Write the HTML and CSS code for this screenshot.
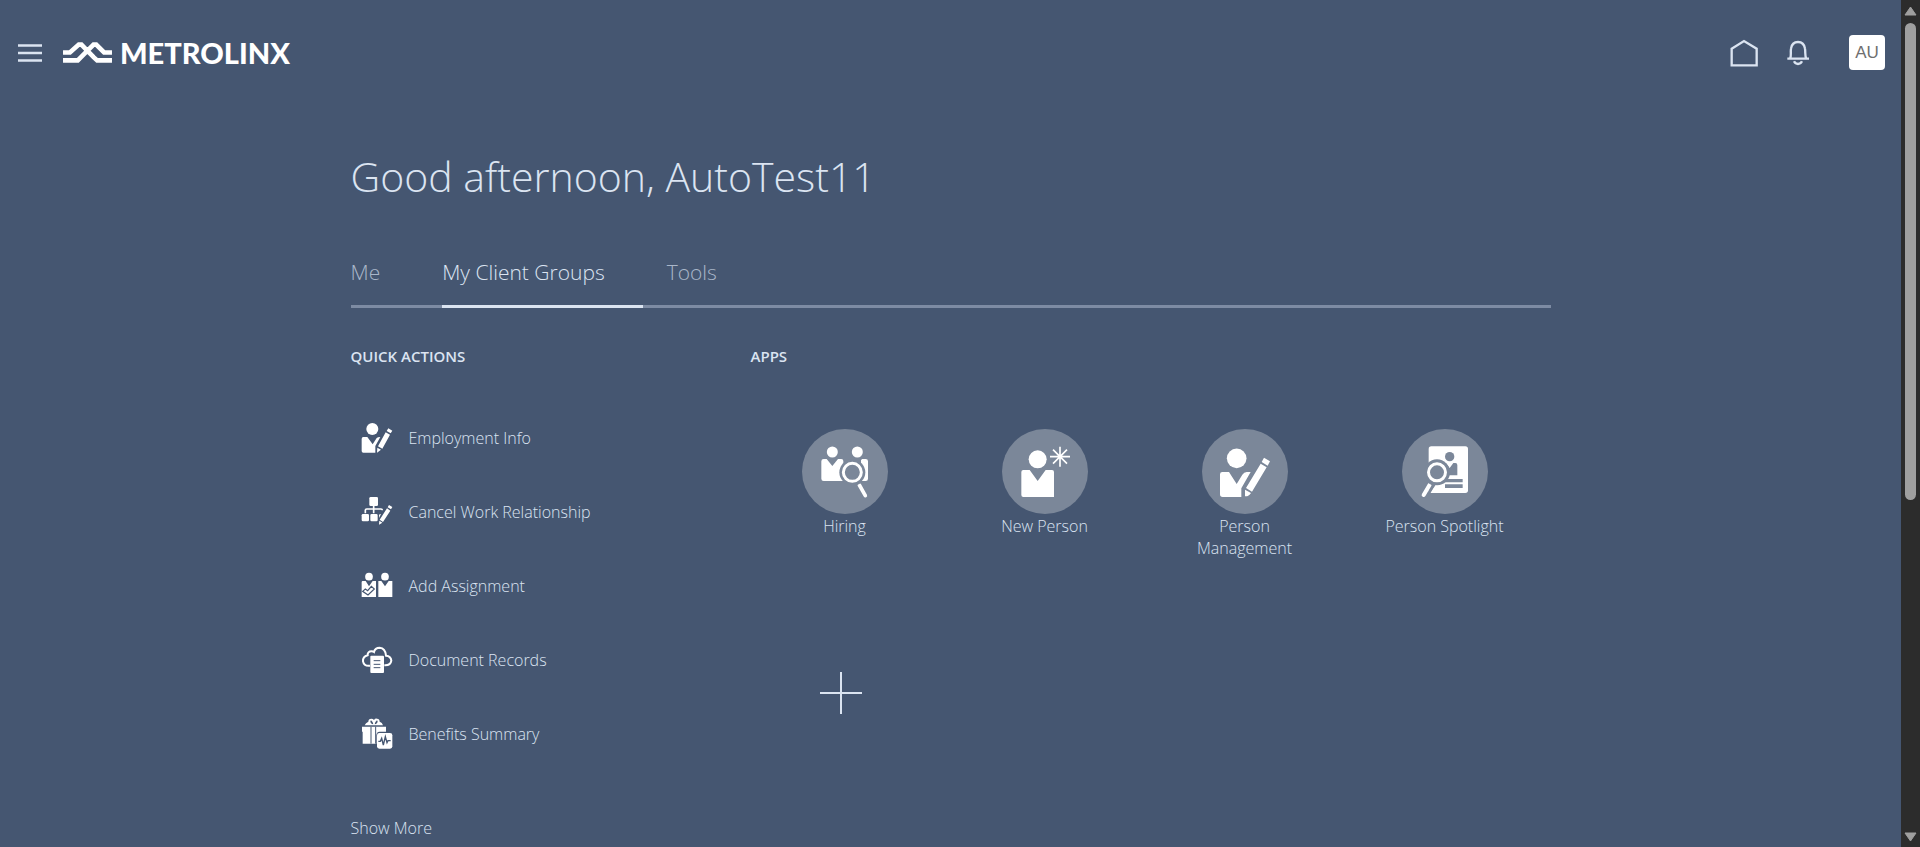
FILE: index.html
```html
<!DOCTYPE html>
<html lang="en">
<head>
<meta charset="utf-8">
<title>Metrolinx</title>
<link rel="stylesheet" href="styles.css">
</head>
<body>
<div class="page">
  <header class="topbar">
    <button class="icon-button" type="button" aria-label="Navigator">
      <svg class="icon-menu" viewBox="0 0 24 18"><path d="M0 1.5h24M0 9h24M0 16.5h24"/></svg>
    </button>
    <a class="brand" href="#" aria-label="Metrolinx home">
      <svg class="brand-mark" viewBox="187 62 153 70">
        <path d="M189 97H210L237 73H245L282 111L293 121H338M189 121H234L246 109L282 73H290L314 97H338" fill="none" stroke="#fff" stroke-width="14"/>
      </svg>
      <span class="brand-name">METROLINX</span>
    </a>
    <nav class="tools" aria-label="Global">
      <a class="tool" href="#" aria-label="Home">
        <svg class="icon-tool" viewBox="90 117 84 84"><path d="M95 146L132 123L170 146V196H95Z"/></svg>
      </a>
      <button class="icon-button" type="button" aria-label="Notifications">
        <svg class="icon-tool" viewBox="252 117 84 84"><path d="M262 176H327M270 176C275 169 271 158 273 146C275 132 283 126 294 126S313 132 315 146C317 158 314 169 319 176"/><path d="M282 184Q286 192 294 192T306 184"/></svg>
      </button>
      <button class="avatar" type="button">AU</button>
    </nav>
  </header>

  <main class="content">
    <h1 class="greeting">Good afternoon, AutoTest11</h1>
    <nav class="tabs" aria-label="Springboard">
      <a class="tab" href="#">Me</a>
      <a class="tab tab-active" href="#" aria-current="page">My Client Groups</a>
      <a class="tab" href="#">Tools</a>
    </nav>

    <div class="columns">
      <section class="quick">
        <h2 class="section-title">QUICK ACTIONS</h2>
        <ul class="actions">
          <li><a class="action" href="#">
            <svg class="action-icon" viewBox="62 67 96 96">
              <circle cx="96" cy="88" r="18"/>
              <path d="M69 112H81L97 134L109 115Q112 112 120 112L105 139V159H69Q64 159 64 154V118Q64 112 69 112Z"/>
              <path d="M144 86L156 93L151 101L139 94ZM136 98L149 105L126 147L113 140ZM111 144L122 150L110 159Z"/>
            </svg>Employment Info</a></li>
          <li><a class="action" href="#">
            <svg class="action-icon" viewBox="62 289 96 96">
              <rect x="87" y="292" width="26" height="27" rx="4"/>
              <path d="M75 341V332Q75 328 79 328H122Q126 328 126 332M100 318V341" fill="none" stroke="#fff" stroke-width="5"/>
              <rect x="64" y="343" width="22" height="22" rx="4"/>
              <path d="M94 343H108Q112 343 112 347V361Q112 365 108 365H94Q90 365 90 361V347Q90 343 94 343ZM116 345Q118 343 122 343L116 355Z"/>
              <path d="M146 316L156 322L152 329L142 323ZM140 326L150 333L128 367L118 360ZM117 363L126 369L116 375Z"/>
            </svg>Cancel Work Relationship</a></li>
          <li><a class="action" href="#">
            <svg class="action-icon" viewBox="62 510 96 96">
              <circle cx="86" cy="530" r="11.500"/><circle cx="134" cy="530" r="11.500"/>
              <path d="M66 543H76L86 559L97 543H107V591H64V545ZM114 543H123L134 559L145 543H156V591H114Z"/>
              <path d="M67 574L75 567L82 572L93 559L102 567L83 585Z" fill="#fff" stroke="#455671" stroke-width="3.500"/>
            </svg>Add Assignment</a></li>
          <li><a class="action" href="#">
            <svg class="action-icon" viewBox="62 69 96 96">
              <path d="M89 134Q71 136 68 121Q67 107 82 103Q81 91 94 91Q98 91 101 93Q104 80 118 80Q135 81 137 104Q152 105 153 119Q151 134 132 133" fill="none" stroke="#fff" stroke-width="6"/>
              <rect x="90" y="104" width="41" height="52" rx="3"/>
              <path d="M100 119H120M100 130H120M100 140H120" stroke="#455671" stroke-width="3"/>
            </svg>Document Records</a></li>
          <li><a class="action" href="#">
            <svg class="action-icon" viewBox="62 292 96 96">
              <path d="M73 314Q76 306 84 303Q84 294 93 294Q98 294 101 298Q104 293 110 294Q118 294 118 303Q126 305 128 314Z"/>
              <path d="M92 299Q87 304 95 310L99 311Q98 303 92 299ZM110 299Q115 304 107 310L103 311Q104 303 110 299Z" fill="#455671"/>
              <path d="M65 318H137V333H118Q108 334 108 344V369H67V333H65Z"/>
              <path d="M92 318V369M106 318V369" stroke="#455671" stroke-width="3"/>
              <rect x="110" y="337" width="46" height="47" rx="7"/>
              <path d="M114 362H120L124 353L129 373L135 348L140 366L143 360H151" fill="none" stroke="#455671" stroke-width="4"/>
            </svg>Benefits Summary</a></li>
        </ul>
        <a class="show-more" href="#">Show More</a>
      </section>

      <section class="apps">
        <h2 class="section-title">APPS</h2>
        <ul class="app-grid">
          <li><a class="app" href="#">
            <svg class="app-icon" viewBox="63 57 258 255">
              <circle cx="154" cy="126" r="16.500"/><circle cx="229" cy="126" r="16.500"/>
              <path d="M128 147H137L154 168L171 147H181Q187 147 187 153V213H128Q121 213 121 206V154Q121 147 128 147ZM240 150L244 147H254Q261 147 261 154V206Q261 213 254 213H240Z"/>
              <circle cx="214" cy="187" r="39" fill="#7b8799"/>
              <circle cx="214" cy="187" r="27" fill="none" stroke="#fff" stroke-width="9"/>
              <path d="M235 225L253 257" stroke="#fff" stroke-width="11" stroke-linecap="round"/>
              <path d="M226 223L239 216" stroke="#7b8799" stroke-width="6"/>
            </svg>Hiring</a></li>
          <li><a class="app" href="#">
            <svg class="app-icon" viewBox="663 57 258 255">
              <circle cx="770" cy="148" r="27"/>
              <path d="M727 180H746L770 213L794 180H813Q819 180 819 186V261H727Q721 261 721 255V186Q721 180 727 180Z"/>
              <path d="M837 110V170M807 140H867M816 119L858 161M858 119L816 161" stroke="#fff" stroke-width="5"/>
            </svg>New Person</a></li>
          <li><a class="app" href="#">
            <svg class="app-icon" viewBox="63 57 258 255">
              <circle cx="167" cy="145" r="29.500"/>
              <path d="M124 186H144L167 222L184 194Q189 186 197 186H209L181 235V261H125Q117 261 117 253V193Q117 186 124 186Z"/>
              <path d="M249 143L267 154L260 167L242 156ZM239 161L257 172L213 245L195 234ZM192 239L210 249Q203 260 192 259Z"/>
            </svg>Person Management</a></li>
          <li><a class="app" href="#">
            <svg class="app-icon" viewBox="663 57 258 255">
              <path d="M751 109H853Q861 109 861 117V241Q861 249 853 249H751Q743 249 743 241V117Q743 109 751 109Z"/>
              <g fill="#7b8799">
                <circle cx="806" cy="140" r="14"/>
                <path d="M782 160H795L806 174L817 159H823Q829 159 829 165V196H782ZM790 207H845V217H790ZM792 223H845V234H792Z"/>
                <circle cx="768" cy="187" r="39"/>
                <path d="M743 156V253L750 247L769 216Z"/>
              </g>
              <path d="M764 231H780L784 223H792V234H778V249H750L758 235Z"/>
              <circle cx="768" cy="187" r="25.500" fill="#7b8799" stroke="#fff" stroke-width="9"/>
              <path d="M746 224L728 255" stroke="#fff" stroke-width="12" stroke-linecap="round"/>
              <path d="M740 215L756 224" stroke="#7b8799" stroke-width="6"/>
            </svg>Person Spotlight</a></li>
        </ul>
        <button class="add-app" type="button" aria-label="Add app">
          <svg class="icon-plus" viewBox="0 0 42 42"><path d="M21 0V42M0 21H42"/></svg>
        </button>
      </section>
    </div>
  </main>
</div>
<div class="scrollbar" aria-hidden="true">
  <svg class="arrow" viewBox="0 0 13 10"><path d="M6.500 1L12 9H1Z"/></svg>
  <div class="thumb"></div>
  <svg class="arrow arrow-down" viewBox="0 0 13 10"><path d="M6.500 9L12 1H1Z"/></svg>
</div>
</body>
</html>
```
FILE: styles.css
```css
* { box-sizing: border-box; }

body {
  margin: 0;
  display: grid;
  grid-template-columns: 1fr 19px;
  min-height: 100vh;
  background: #455671;
  color: #dbe4f1;
  font-family: "Open Sans", "Noto Sans", sans-serif;
  font-size: 16px;
  font-weight: 300;
  line-height: 22px;
}

a { color: inherit; text-decoration: none; }
ul { list-style: none; margin: 0; padding: 0; }
h1, h2 { margin: 0; }
svg { display: block; flex: none; }

button {
  border: 0;
  padding: 0;
  background: none;
  color: inherit;
  font: inherit;
}

.topbar {
  display: flex;
  align-items: center;
  height: 105px;
  padding: 0 16px 0 18px;
}

.icon-menu { width: 24px; height: 18px; fill: none; stroke: #dbe4f1; stroke-width: 2.5; }

.brand {
  display: flex;
  align-items: center;
  gap: 7px;
  margin-left: 20px;
}

.brand-mark { width: 51px; height: 23px; }

.brand-name {
  color: #fff;
  font-family: Lato, sans-serif;
  font-size: 29px;
  font-weight: 900;
  line-height: 30px;
}

.tools {
  display: flex;
  align-items: center;
  gap: 26px;
  margin-left: auto;
}

.icon-tool { width: 28px; height: 28px; fill: none; stroke: #dbe4f1; stroke-width: 7; }

.avatar {
  width: 36px;
  height: 35px;
  margin-left: 11px;
  border-radius: 4px;
  background: #fff;
  color: #6f6f6f;
  font-family: "Liberation Sans", Arial, sans-serif;
  font-size: 17px;
  font-weight: 400;
}

.content {
  width: 1200px;
  max-width: 100%;
  margin: 0 auto;
}

.greeting {
  padding: 41px 0 42px;
  font-size: 41px;
  font-weight: 300;
  line-height: 60px;
}

.tabs {
  display: flex;
  gap: 24px;
  border-bottom: 3px solid #7d8ba3;
}

.tab {
  margin-bottom: -3px;
  padding: 9px 38px 18px 0;
  border-bottom: 3px solid transparent;
  color: #a9b6c9;
  font-size: 21px;
  line-height: 30px;
}

.tab-active { border-color: #dbe4f1; color: #dbe4f1; }

.columns {
  display: grid;
  grid-template-columns: 1fr 2fr;
  padding-top: 37px;
}

.section-title {
  font-size: 15px;
  font-weight: 600;
  line-height: 22px;
}

.actions { padding-top: 34px; }

.action {
  display: flex;
  align-items: center;
  gap: 16px;
  height: 74px;
  padding-left: 10px;
}

.action-icon { width: 32px; height: 32px; fill: #fff; }

.show-more {
  display: inline-block;
  margin-top: 46px;
}

.app-grid {
  display: grid;
  grid-template-columns: repeat(4, 1fr);
  padding-top: 62px;
}

.apps .app-grid { margin: 0 6px 0 -6px; }

.app {
  display: flex;
  flex-direction: column;
  align-items: center;
  padding: 0 36px;
  text-align: center;
}

.app-icon {
  width: 86px;
  height: 85px;
  margin-bottom: 1px;
  border-radius: 50%;
  background: #7b8799;
  fill: #fff;
}

.add-app { display: block; margin: 113px 0 0 69px; }
.icon-plus { width: 42px; height: 42px; stroke: #dbe4f1; stroke-width: 2; }

.scrollbar {
  display: flex;
  flex-direction: column;
  align-items: center;
  padding: 6px 0 5px;
  background: #2c2c2c;
}

.thumb {
  width: 11px;
  height: 57%;
  margin-top: 7px;
  border-radius: 6px;
  background: #9f9f9f;
}

.arrow { width: 13px; height: 10px; fill: #9f9f9f; stroke: #9f9f9f; stroke-linejoin: round; }
.arrow-down { margin-top: auto; }
```
